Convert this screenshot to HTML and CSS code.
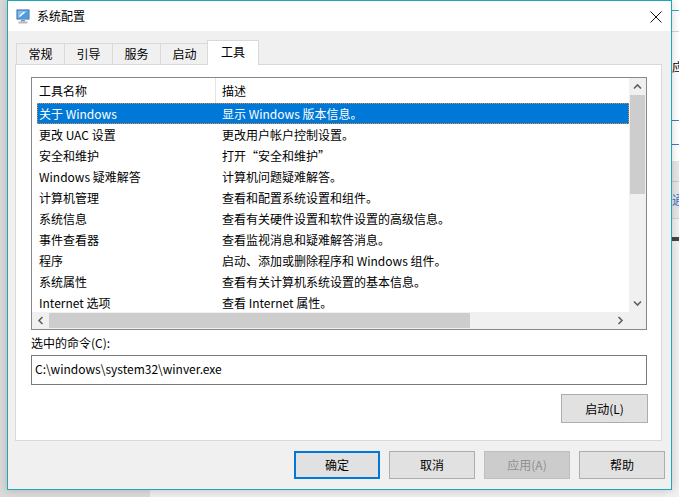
FILE: index.html
```html
<!DOCTYPE html>
<html lang="zh-CN">
<head>
    <meta charset="UTF-8">
    <title>系统配置</title>
    <link rel="stylesheet" href="styles.css">
</head>
<body>
    <div class="desktop">
        <!-- window behind, only its left edge shows -->
        <div class="bg-window">
            <div class="bg-top"></div>
            <div class="bg-title"></div>
            <div class="bg-text">应</div>
            <div class="bg-gap"></div>
            <div class="bg-blue"></div>
            <div class="bg-gap2"></div>
            <div class="bg-blue"></div>
            <div class="bg-gap3"></div>
            <div class="bg-band"></div>
            <div class="bg-band2">通</div>
            <div class="bg-faint"></div>
            <div class="bg-dark"></div>
        </div>

        <div class="window">
            <div class="titlebar">
                <svg class="app-icon" width="14" height="15" viewBox="0 0 14 15">
                    <rect x="0.5" y="0.5" width="13" height="10" fill="#3a5ea8" />
                    <rect x="1.5" y="1.5" width="11" height="8" fill="#7cc0ee" />
                    <path d="M1.5 9.5 L12.5 1.5 L12.5 9.5 Z" fill="#4a9ee0" />
                    <path d="M3.5 7.5 L8.5 3" stroke="#fff" stroke-width="1.2" fill="none" />
                    <rect x="5" y="11" width="4" height="1.5" fill="#8a8f98" />
                    <rect x="2.5" y="12.5" width="9" height="2" fill="#b5b9bf" />
                </svg>
                <span class="title">系统配置</span>
                <svg class="close" width="12" height="12" viewBox="0 0 12 12">
                    <path d="M0.5 0.5 L11.5 11.5 M11.5 0.5 L0.5 11.5" stroke="#111" stroke-width="1" />
                </svg>
            </div>

            <div class="client">
                <div class="tabs">
                    <div class="tab">常规</div>
                    <div class="tab">引导</div>
                    <div class="tab">服务</div>
                    <div class="tab">启动</div>
                    <div class="tab active">工具</div>
                </div>

                <div class="panel">
                    <div class="listview">
                        <div class="list-main">
                            <div class="list-body">
                                <div class="list-header">
                                    <div class="col-head first">工具名称</div>
                                    <div class="col-head">描述</div>
                                </div>
                                <div class="row selected"><span>关于 Windows</span><span>显示 Windows 版本信息。</span></div>
                                <div class="row"><span>更改 UAC 设置</span><span>更改用户帐户控制设置。</span></div>
                                <div class="row"><span>安全和维护</span><span>打开“安全和维护”</span></div>
                                <div class="row"><span>Windows 疑难解答</span><span>计算机问题疑难解答。</span></div>
                                <div class="row"><span>计算机管理</span><span>查看和配置系统设置和组件。</span></div>
                                <div class="row"><span>系统信息</span><span>查看有关硬件设置和软件设置的高级信息。</span></div>
                                <div class="row"><span>事件查看器</span><span>查看监视消息和疑难解答消息。</span></div>
                                <div class="row"><span>程序</span><span>启动、添加或删除程序和 Windows 组件。</span></div>
                                <div class="row"><span>系统属性</span><span>查看有关计算机系统设置的基本信息。</span></div>
                                <div class="row"><span>Internet 选项</span><span>查看 Internet 属性。</span></div>
                            </div>
                            <div class="vscroll">
                                <div class="sb-btn">
                                    <svg width="9" height="9" viewBox="0 0 9 9"><polyline points="1,6.5 4.5,3 8,6.5" fill="none" stroke="#606060" stroke-width="1.6" /></svg>
                                </div>
                                <div class="v-thumb"></div>
                                <div class="v-track"></div>
                                <div class="sb-btn">
                                    <svg width="9" height="9" viewBox="0 0 9 9"><polyline points="1,2.5 4.5,6 8,2.5" fill="none" stroke="#606060" stroke-width="1.6" /></svg>
                                </div>
                            </div>
                        </div>
                        <div class="hscroll">
                            <div class="sb-btn">
                                <svg width="9" height="9" viewBox="0 0 9 9"><polyline points="6.5,1 3,4.5 6.5,8" fill="none" stroke="#606060" stroke-width="1.6" /></svg>
                            </div>
                            <div class="h-thumb"></div>
                            <div class="h-track"></div>
                            <div class="sb-btn">
                                <svg width="9" height="9" viewBox="0 0 9 9"><polyline points="2.5,1 6,4.5 2.5,8" fill="none" stroke="#606060" stroke-width="1.6" /></svg>
                            </div>
                            <div class="corner"></div>
                        </div>
                    </div>

                    <div class="cmd-label">选中的命令(C):</div>
                    <div class="cmd-box">C:\windows\system32\winver.exe</div>

                    <div class="launch-row">
                        <button class="btn">启动(L)</button>
                    </div>
                </div>

                <div class="dialog-buttons">
                    <button class="btn default">确定</button>
                    <button class="btn">取消</button>
                    <button class="btn disabled">应用(A)</button>
                    <button class="btn">帮助</button>
                </div>
            </div>
        </div>
    </div>
</body>
</html>
```

FILE: styles.css
```css
body, html {
    margin: 0;
    padding: 0;
    font-family: "Noto Sans CJK SC", "Noto Sans", sans-serif;
    font-size: 12px;
    color: #000;
}

.desktop {
    position: relative;
    width: 679px;
    height: 497px;
    overflow: hidden;
    background: linear-gradient(to right, #d9d9d9 150px, #ededed 150px);
}

/* background window on the right */
.bg-window {
    position: absolute;
    left: 665px;
    top: 0;
    width: 20px;
    height: 497px;
    background: #f0f0f0;
    display: flex;
    flex-direction: column;
}

.bg-top {
    height: 10px;
    background: #fff;
    border-bottom: 1px solid #2bb0c2;
}

.bg-title {
    height: 20px;
    background: #fff;
    border-bottom: 1px solid #d5d5d5;
}

.bg-text {
    height: 30px;
    padding-top: 25px;
    padding-left: 7px;
    background: #fff;
    line-height: 20px;
    overflow: hidden;
}

.bg-gap {
    height: 33px;
    background: #fff;
}

.bg-blue {
    height: 1px;
    background: #3a7bd5;
}

.bg-gap2 {
    height: 23px;
    background: #fff;
}

.bg-gap3 {
    height: 16px;
    background: #fff;
}

.bg-band {
    height: 20px;
    background: #e6e6e6;
    border-bottom: 1px solid #c8c8c8;
}

.bg-band2 {
    height: 36px;
    background: #e6e6e6;
    color: #2a6fc9;
    padding-left: 7px;
    line-height: 36px;
    border-bottom: 1px solid #d0d0d0;
}

.bg-faint {
    height: 18px;
}

.bg-dark {
    height: 4px;
    margin-left: 7px;
    background: #444;
}

/* main dialog */
.window {
    position: relative;
    margin-left: 7px;
    width: 665px;
    height: 490px;
    box-sizing: border-box;
    border: 1px solid #1ea7bb;
    background: #f0f0f0;
    box-shadow: 0 0 8px rgba(0, 0, 0, 0.18);
    display: flex;
    flex-direction: column;
}

.titlebar {
    height: 30px;
    background: #fff;
    display: flex;
    align-items: center;
    padding-left: 8px;
}

.app-icon {
    margin-top: 1px;
}

.title {
    margin-left: 7px;
    line-height: 16px;
}

.close {
    margin-left: auto;
    margin-right: 9px;
    margin-top: 1px;
}

.client {
    padding: 9px 8px 0 7px;
    display: flex;
    flex-direction: column;
}

.tabs {
    display: flex;
    align-items: flex-end;
    height: 24px;
    padding-left: 1px;
}

.tab {
    position: relative;
    width: 49px;
    height: 21px;
    box-sizing: border-box;
    margin-right: -1px;
    border: 1px solid #d9d9d9;
    border-bottom: none;
    background: #f0f0f0;
    text-align: center;
    line-height: 20px;
}

.tab.active {
    width: 52px;
    height: 25px;
    margin-left: -1px;
    margin-bottom: -1px;
    background: #fff;
    z-index: 1;
    line-height: 22px;
}

.panel {
    width: 647px;
    height: 377px;
    box-sizing: border-box;
    border: 1px solid #d9d9d9;
    background: #fff;
    padding: 12px 14px 0 15px;
    display: flex;
    flex-direction: column;
}

.listview {
    width: 616px;
    height: 253px;
    box-sizing: border-box;
    border: 1px solid #828790;
    display: flex;
    flex-direction: column;
}

.list-main {
    display: flex;
    height: 234px;
}

.list-body {
    flex: 1;
    overflow: hidden;
    background: #fff;
}

.list-header {
    display: grid;
    grid-template-columns: 184px 1fr;
    height: 25px;
}

.col-head {
    padding-left: 6px;
    line-height: 25px;
}

.col-head.first {
    padding-left: 7px;
    border-right: 1px solid #e5e5e5;
}

.row {
    display: grid;
    grid-template-columns: 178px 1fr;
    height: 21px;
    box-sizing: border-box;
    margin-left: 5px;
    line-height: 20px;
    white-space: nowrap;
    border: 1px solid transparent;
}

.row span {
    padding-left: 1px;
}

.row span + span {
    padding-left: 6px;
}

.row.selected {
    background: #0078d7;
    color: #fff;
    border: 1px dotted #e08a3c;
}

.vscroll {
    width: 17px;
    background: #f0f0f0;
    display: flex;
    flex-direction: column;
}

.sb-btn {
    width: 17px;
    height: 17px;
    display: flex;
    align-items: center;
    justify-content: center;
    flex-shrink: 0;
}

.v-thumb {
    height: 99px;
    margin: 0 1px;
    background: #cdcdcd;
}

.v-track {
    flex: 1;
}

.hscroll {
    height: 17px;
    display: flex;
    background: #f0f0f0;
}

.h-thumb {
    width: 421px;
    margin: 1px 0;
    background: #cdcdcd;
}

.h-track {
    flex: 1;
}

.corner {
    width: 17px;
    background: #f0f0f0;
}

.cmd-label {
    margin-top: 5px;
    line-height: 16px;
}

.cmd-box {
    margin-top: 4px;
    width: 616px;
    height: 30px;
    box-sizing: border-box;
    border: 1px solid #7a7a7a;
    padding-left: 3px;
    line-height: 26px;
}

.launch-row {
    display: flex;
    justify-content: flex-end;
    margin-top: 9px;
    margin-right: -1px;
}

.btn {
    width: 86px;
    height: 28px;
    box-sizing: border-box;
    border: 1px solid #adadad;
    background: #e1e1e1;
    font-family: "Noto Sans CJK SC", "Noto Sans", sans-serif;
    font-size: 12px;
    color: #000;
    padding: 0;
    line-height: 24px;
}

.launch-row .btn {
    width: 87px;
    height: 29px;
}

.dialog-buttons {
    display: flex;
    justify-content: flex-end;
    gap: 9px;
    margin-top: 10px;
    margin-right: -2px;
}

.btn.default {
    border: 2px solid #0078d7;
}

.btn.disabled {
    background: #cccccc;
    border-color: #bfbfbf;
    color: #8f8f8f;
}
```
